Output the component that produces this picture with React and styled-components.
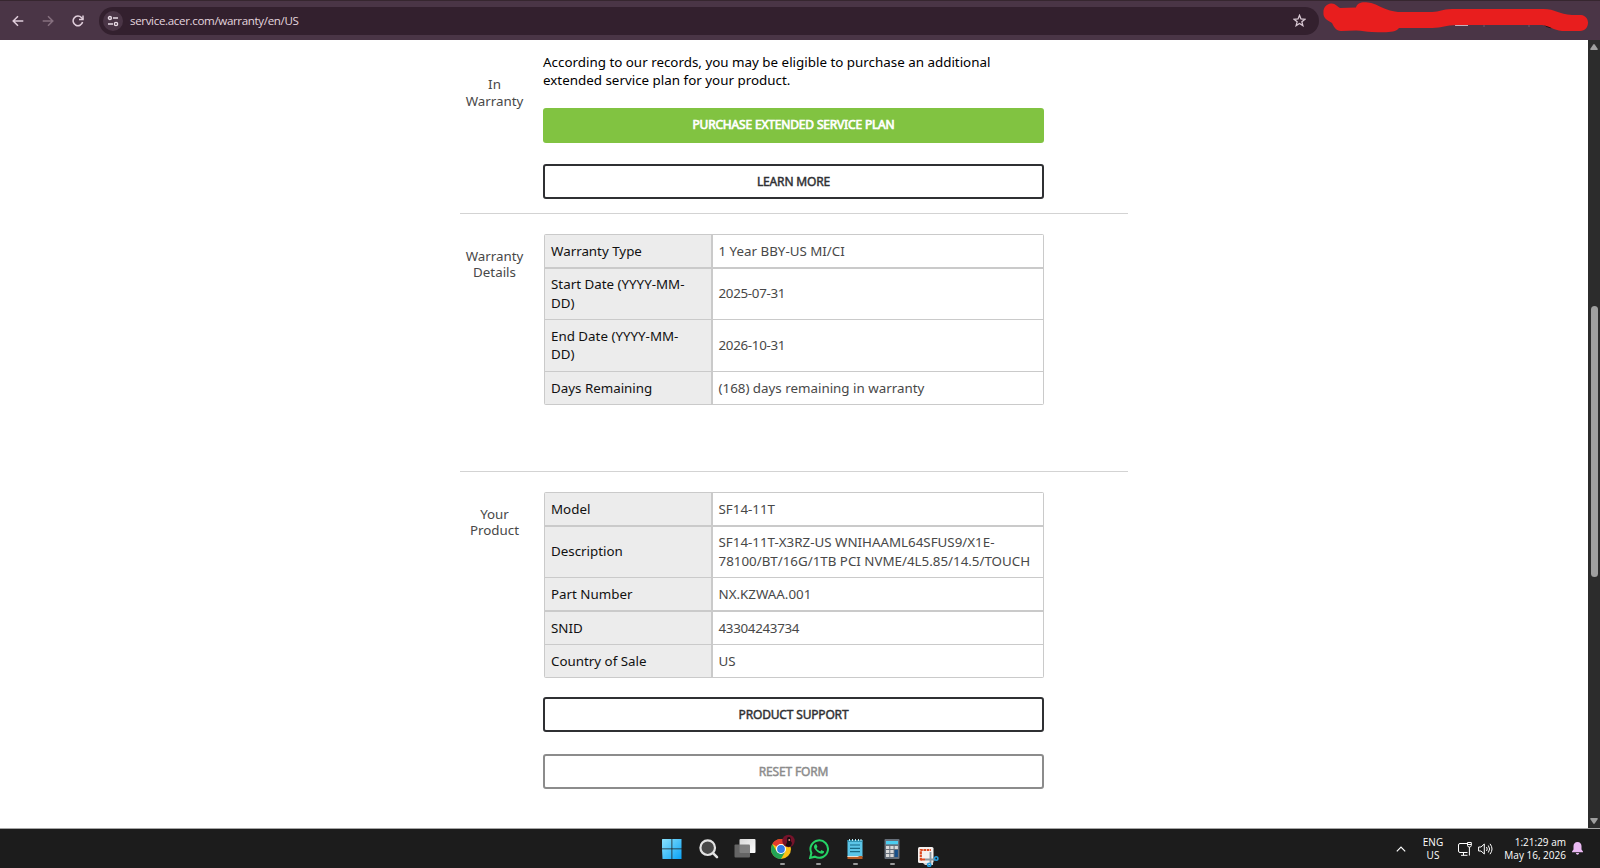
import React from 'react'
import styled, { createGlobalStyle } from 'styled-components'

const BLACK = '#111111'
const DARKGREY = '#484848'
const BORDER = '#cacaca'
const GREEN = '#81c341'
const RED = '#e81e1e'

const GlobalStyle = createGlobalStyle`
*{
    box-sizing: border-box;
}
body{
    margin: 0;
    overflow: hidden;
    font-family: "Noto Sans", "Open Sans", sans-serif;
}
p{
    margin: 0;
}
svg{
    display: block;
    flex-shrink: 0;
}
`

const Screen = styled.div`
display: flex;
flex-direction: column;
width: 1600px;
height: 868px;
overflow: hidden;
background: white;
`

const Toolbar = styled.div`
display: flex;
align-items: center;
height: 40px;
flex-shrink: 0;
padding-left: 10px;
background: #4a3546;
border-top: 1px solid #36262f;
`

const NavButton = styled.div`
display: flex;
justify-content: center;
align-items: center;
width: 16px;
height: 16px;
margin-right: ${props => props.$gap || 14}px;
`

const AddressBar = styled.div`
display: flex;
align-items: center;
width: 1220px;
height: 28px;
margin-right: 4px;
padding: 0 13px 0 4px;
border-radius: 14px;
background: #33202e;
`

const SiteInfo = styled.div`
display: flex;
justify-content: center;
align-items: center;
width: 20px;
height: 20px;
border-radius: 50%;
background: #4a3546;
`

const Url = styled.p`
flex-grow: 1;
margin-left: 7px;
font-family: "Open Sans", sans-serif;
font-size: 11.6px;
letter-spacing: -0.36px;
color: #e3d5de;
`

const Viewport = styled.div`
display: flex;
height: 788px;
flex-shrink: 0;
`

const Page = styled.div`
flex-grow: 1;
padding-left: 460px;
`

const Section = styled.div`
display: flex;
width: 668px;
height: ${props => props.$height}px;
padding-top: ${props => props.$top}px;
border-bottom: ${props => props.$last ? 'none' : '1px solid #d3d3d3'};
`

const Label = styled.p`
width: 69px;
margin-right: 14px;
padding-top: ${props => props.$top}px;
flex-shrink: 0;
text-align: center;
font-size: 13.35px;
line-height: 16.6px;
color: ${DARKGREY};
`

const Content = styled.div`
width: 501px;
`

const Message = styled.p`
font-size: 13.38px;
line-height: 18.4px;
color: #000;
`

const Button = styled.div`
display: flex;
justify-content: center;
align-items: center;
height: 35px;
margin-top: ${props => props.$top}px;
padding-bottom: 1px;
border: ${props => props.$filled ? 'none' : '2px solid ' + props.$color};
border-radius: 3px;
background: ${props => props.$filled ? GREEN : 'white'};
color: ${props => props.$filled ? 'white' : props.$color};
font-size: 12px;
letter-spacing: -0.17px;
-webkit-text-stroke: ${props => props.$filled ? 0.7 : 0.45}px currentColor;
`

const Table = styled.div`
display: grid;
grid-template-columns: 166px 1fr;
gap: 1.5px;
width: 500px;
margin-left: 1px;
padding: 1px;
background: ${BORDER};
border-radius: 2px;
`

const Cell = styled.div`
display: flex;
align-items: center;
height: ${props => props.$tall ? 50.25 : 32}px;
padding: 0 6px;
background: ${props => props.$head ? '#ececec' : 'white'};
color: ${props => props.$head ? BLACK : DARKGREY};
font-size: 13.35px;
line-height: 18.4px;
letter-spacing: ${props => props.$tight ? -0.3 : 0}px;
white-space: pre;
`

const Scrollbar = styled.div`
display: flex;
flex-direction: column;
align-items: center;
justify-content: space-between;
width: 12px;
padding: 4px 0;
background: #2c2c2c;
`

const Track = styled.div`
flex-grow: 1;
padding-top: 256px;
`

const Thumb = styled.div`
width: 7px;
height: 271px;
border-radius: 4px;
background: #9f9f9f;
`

const Taskbar = styled.div`
display: flex;
align-items: center;
height: 40px;
border-top: 1px solid #a5a5a5;
background: #1c1c1c;
`

const Apps = styled.div`
display: flex;
gap: 4.7px;
width: 300px;
margin-left: 656px;
`

const App32 = styled.div`
display: flex;
flex-direction: column;
align-items: center;
width: 32px;
height: 39px;
padding-top: ${props => props.$top || 9}px;
`

const Running = styled.div`
width: 5px;
height: 2px;
margin-top: 4px;
border-radius: 1px;
background: #9a9a9a;
`

const Tray = styled.div`
display: flex;
align-items: center;
margin-left: 440px;
color: white;
`

const TrayText = styled.p`
width: ${props => props.$width}px;
padding-top: 1px;
text-align: ${props => props.$align};
font-family: "Open Sans", sans-serif;
font-size: 10px;
line-height: 13.4px;
white-space: nowrap;
`

const TrayIcon = styled.div`
margin-left: ${props => props.$left || 0}px;
`

const Arrow = ({ flip, color }) => (
    <svg width="12" height="12" viewBox="0 0 12 12" fill="none" stroke={color} strokeWidth="1.5" transform={flip ? 'scale(-1 1)' : undefined}>
        <path d="M11.3 6H1.5M6 1.2L1.2 6L6 10.8" />
    </svg>
)

const Reload = () => (
    <svg width="12" height="12" viewBox="0 0 12 12" fill="none" stroke="#e0cedb" strokeWidth="1.5">
        <path d="M10.6 7A4.8 4.8 0 1 1 9.6 2.8L11 4.3" />
        <path d="M11 0.5V4.6H7" />
    </svg>
)

const Tune = () => (
    <svg width="12" height="12" viewBox="0 0 12 12" fill="none" stroke="#e8dbe5" strokeWidth="1.4">
        <circle cx="2.9" cy="3" r="1.5" />
        <path d="M6 3H11M1 9H6" />
        <circle cx="9" cy="9" r="1.6" />
    </svg>
)

const Star = () => (
    <svg width="13" height="13" viewBox="0 0 24 24" fill="none" stroke="#d9c9d4" strokeWidth="2.4">
        <path d="M12 2.5L14.7 9.2L22 9.7L16.4 14.4L18.2 21.5L12 17.6L5.8 21.5L7.6 14.4L2 9.7L9.3 9.2Z" />
    </svg>
)

const Scribble = () => (
    <svg width="277" height="39" viewBox="1323 1 277 39">
        <path d="M1455 24.5h13v1.2h-13z" fill="#f5e9f1" />
        <path d="M1544 25Q1549 30 1555 27L1550 24Z" fill="#111" />
        <path d="M1502 24.5h3M1507 24.5h3M1484 24v3M1529 24v3" stroke="#6e5a69" />
        <path fill={RED} d="M1331 3.5C1335 3 1338 7 1340 8L1356 7.5C1357 3 1362 1.5 1368 2.5C1377 3 1382 10 1398 12H1432C1440 12 1442 9 1452 9H1542C1555 8.5 1558 14 1572 15H1581C1591 16 1590 31 1580 31H1562C1553 30 1550 26 1542 25H1457C1445 25 1443 28 1432 28H1399C1395 33 1386 32.5 1372 32C1366 32 1362 30.5 1356 30.5L1341 31C1336 31 1334 27 1332 23C1326 20 1323 17 1323.5 13C1323 8 1326 4 1331 3.5Z" />
    </svg>
)

const Triangle = ({ down }) => (
    <svg width="8" height="6" viewBox="0 0 8 6" fill="#9f9f9f" transform={down ? 'scale(1 -1)' : undefined}>
        <path d="M3.3 0.5Q4 -0.3 4.7 0.5L7.8 5Q8 6 7 6H1Q0 6 0.2 5Z" />
    </svg>
)

const Windows = () => (
    <svg width="20" height="20" viewBox="0 0 20 20">
        <defs>
            <linearGradient id="win" x1="0" y1="0" x2="20" y2="20" gradientUnits="userSpaceOnUse">
                <stop offset="0" stopColor="#8be2fd" />
                <stop offset="1" stopColor="#08a1f5" />
            </linearGradient>
        </defs>
        <path fill="url(#win)" d="M.5 0H9.5V9.5H0V.5ZM10.3 0H19.5V9.5H10.3ZM0 10.3H9.5V20H.5ZM10.3 10.3H19.5V20H10.3Z" />
    </svg>
)

const Search = () => (
    <svg width="20" height="20" viewBox="0 0 20 20" stroke="#e2e2e2" strokeLinecap="round">
        <circle cx="8.7" cy="8.7" r="7.3" fill="#484848" strokeWidth="2.2" />
        <path d="M14.3 14.3L18 18.2" strokeWidth="2.5" />
    </svg>
)

const TaskView = () => (
    <svg width="22" height="20" viewBox="0 0 22 20">
        <defs>
            <linearGradient id="pane" x1="0" y1="0" x2="1" y2="1">
                <stop offset="0" stopColor="#d8d8d8" />
                <stop offset="1" stopColor="#ffffff" />
            </linearGradient>
        </defs>
        <rect x="5.5" y="1" width="16" height="14" rx="1" fill="url(#pane)" />
        <rect x=".5" y="6.500" width="15.5" height="13" rx="1" fill="#707070" opacity=".88" />
    </svg>
)

const Chrome = () => (
    <svg width="26" height="25" viewBox="0 0 26 25">
        <circle cx="12" cy="15" r="10" fill="#fbc116" />
        <path d="M12 15L3.34 10A10 10 0 0 1 20.66 10H12Z" fill="#e33b2e" />
        <path d="M3.34 10A10 10 0 0 0 12 25L16.3 17.5L12 15L7.7 17.5Z" fill="#23a455" />
        <circle cx="12" cy="15" r="5" fill="#fff" />
        <circle cx="12" cy="15" r="3.9" fill="#337be8" />
        <circle cx="19.5" cy="7" r="6.2" fill="#75132a" />
        <path d="M18 5Q18 2.5 20.5 3Q22.5 4 21.5 6.5L23 9L22 12Q19 13.5 16.5 11.5L18 8.500Z" fill="#180c12" />
        <path d="M19.5 5h1.5v2h-1.5z" fill="#c78170" />
    </svg>
)

const WhatsApp = () => (
    <svg width="20" height="20" viewBox="0 0 24 24" fill="#25d366">
        <path d="M17.472 14.382c-.297-.149-1.758-.867-2.03-.967-.273-.099-.471-.148-.67.15-.197.297-.767.966-.94 1.164-.173.199-.347.223-.644.075-.297-.15-1.255-.463-2.39-1.475-.883-.788-1.48-1.761-1.653-2.059-.173-.297-.018-.458.13-.606.134-.133.298-.347.446-.52.149-.174.198-.298.298-.497.099-.198.05-.371-.025-.52-.075-.149-.669-1.612-.916-2.207-.242-.579-.487-.5-.669-.51-.173-.008-.371-.01-.57-.01-.198 0-.52.074-.792.372-.272.297-1.04 1.016-1.04 2.479 0 1.462 1.065 2.875 1.213 3.074.149.198 2.096 3.2 5.077 4.487.709.306 1.262.489 1.694.625.712.227 1.36.195 1.871.118.571-.085 1.758-.719 2.006-1.413.248-.694.248-1.289.173-1.413-.074-.124-.272-.198-.57-.347" />
        <path d="M1.3 22.7L2.9 16.8A10.5 10.5 0 1 1 7.1 21.2Z" fill="none" stroke="#25d366" strokeWidth="2.4" />
    </svg>
)

const Notepad = () => (
    <svg width="16" height="20" viewBox="0 0 16 20">
        <rect x=".5" y="1" width="15" height="17" fill="#5bc5e8" />
        <rect x=".5" y="1" width="15" height="1.8" fill="#2b8ba9" />
        <path d="M2.5 0v2M5.500 0v2M8.500 0v2M11.500 0v2M14 0v2" stroke="#b8edfa" />
        <path d="M3 6h10M3 9.3h10M3 12.6h10" stroke="#176985" strokeWidth="1.2" />
        <path d="M.5 17h15V20H.5z" fill="#b65b24" />
        <path d="M.5 17h12l-2 1H.5z" fill="#e6e0d8" />
    </svg>
)

const Calculator = () => (
    <svg width="16" height="20" viewBox="0 0 16 20">
        <rect x=".5" width="15" height="20" rx="1" fill="#666f7a" />
        <rect x="2" y="2" width="12" height="3.3" fill="#4ccdf0" />
        <path d="M2 7h3.3v3H2zM6.3 7h3.3v3H6.3zM10.6 7h3.3v3h-3.3zM2 11h3.3v3H2zM6.3 11h3.3v3H6.3zM2 15h3.3v3H2zM6.3 15h3.3v3H6.3z" fill="#dadada" />
        <path d="M10.6 11h3.3v7h-3.3z" fill="#17508b" />
    </svg>
)

const Snip = () => (
    <svg width="21" height="20" viewBox="0 0 21 20">
        <rect x="0" y="0" width="15.5" height="16" rx="1.5" fill="#f5f1ef" />
        <path d="M5 16h10v2H7z" fill="#d7d7d7" />
        <path d="M2.8 13.5V3H13" fill="none" stroke="#db4920" strokeWidth="2.2" strokeDasharray="2.6 .7" />
        <path d="M3 12.500h4" stroke="#db4920" strokeWidth="2" />
        <path d="M12.5 5v11M7 12.500H17" stroke="#8d979e" strokeWidth="1.8" />
        <circle cx="18.2" cy="11.5" r="1.7" fill="none" stroke="#249fe0" strokeWidth="1.6" />
        <circle cx="11.2" cy="17.8" r="1.6" fill="none" stroke="#249fe0" strokeWidth="1.6" />
    </svg>
)

const Chevron = () => (
    <svg width="10" height="6" viewBox="0 0 10 6" fill="none" stroke="white" strokeWidth="1.2">
        <path d="M.8 5.3L5 1.1L9.2 5.3" />
    </svg>
)

const Network = () => (
    <svg width="14" height="14" viewBox="0 0 14 14" fill="none" stroke="white">
        <path d="M9 1.5H2Q.5 1.5 .5 3V9Q.5 10.5 2 10.5H9.5M5.5 10.5V13.3M3 13.3H9.5M9.5 .5H13.3V3.5Q13.3 5 11.4 5Q9.5 5 9.5 3.5ZM9.5 2.5H13.3M11.4 5V13.5" />
    </svg>
)

const Speaker = () => (
    <svg width="15" height="14" viewBox="0 0 15 14" fill="none" stroke="white">
        <path d="M.6 5H3L6.3 2V12L3 9H.6ZM8.5 5Q10 7 8.5 9M10.3 3.5Q13 7 10.3 10.5M12 1.8Q16 7 12 12.2" />
    </svg>
)

const Bell = () => (
    <svg width="11" height="13" viewBox="0 0 11 13" fill="#eab9f2">
        <path d="M5.5 0C8 0 9.5 1.8 9.5 4V7.5L11 9.5V10.3H0V9.5L1.5 7.5V4C1.5 1.8 3 0 5.5 0ZM3.8 11H7.2Q6.8 12.8 5.5 12.8Q4.2 12.8 3.8 11Z" />
    </svg>
)

const warranty = [
    ['Warranty Type', '1 Year BBY-US MI/CI'],
    ['Start Date (YYYY-MM-\nDD)', '2025-07-31'],
    ['End Date (YYYY-MM-\nDD)', '2026-10-31'],
    ['Days Remaining', '(168) days remaining in warranty'],
]

const product = [
    ['Model', 'SF14-11T'],
    ['Description', 'SF14-11T-X3RZ-US WNIHAAML64SFUS9/X1E-\n78100/BT/16G/1TB PCI NVME/4L5.85/14.5/TOUCH'],
    ['Part Number', 'NX.KZWAA.001'],
    ['SNID', '43304243734'],
    ['Country of Sale', 'US'],
]

const InfoTable = ({ rows }) => (
    <Table>
        {rows.map(([name, value]) => {
            const tall = (name + value).includes('\n')
            return (
                <React.Fragment key={name}>
                    <Cell $head $tall={tall}>{name}</Cell>
                    <Cell $tall={tall} $tight={/^[\d-]+$/.test(value)}>{value}</Cell>
                </React.Fragment>
            )
        })}
    </Table>
)

const App = () => {
    return (
        <Screen>
            <GlobalStyle />
            <Toolbar>
                <NavButton><Arrow color="#e0cedb" /></NavButton>
                <NavButton><Arrow flip color="#86707f" /></NavButton>
                <NavButton $gap={13}><Reload /></NavButton>
                <AddressBar>
                    <SiteInfo><Tune /></SiteInfo>
                    <Url>service.acer.com/warranty/en/US</Url>
                    <Star />
                </AddressBar>
                <Scribble />
            </Toolbar>
            <Viewport>
                <Page>
                    <Section $height={174} $top={13}>
                        <Label $top={23}>In<br />Warranty</Label>
                        <Content>
                            <Message>According to our records, you may be eligible to purchase an additional<br />extended service plan for your product.</Message>
                            <Button $filled $top={18}>PURCHASE EXTENDED SERVICE PLAN</Button>
                            <Button $color="#2f3033" $top={21.5}>LEARN MORE</Button>
                        </Content>
                    </Section>
                    <Section $height={258} $top={20}>
                        <Label $top={13.5}>Warranty<br />Details</Label>
                        <Content>
                            <InfoTable rows={warranty} />
                        </Content>
                    </Section>
                    <Section $last $height={350} $top={20}>
                        <Label $top={13.5}>Your<br />Product</Label>
                        <Content>
                            <InfoTable rows={product} />
                            <Button $color="#2f3033" $top={19}>PRODUCT SUPPORT</Button>
                            <Button $color="#8c8c8c" $top={22}>RESET FORM</Button>
                        </Content>
                    </Section>
                </Page>
                <Scrollbar>
                    <Triangle />
                    <Track><Thumb /></Track>
                    <Triangle down />
                </Scrollbar>
            </Viewport>
            <Taskbar>
                <Apps>
                    <App32 $top={10}><Windows /></App32>
                    <App32 $top={10}><Search /></App32>
                    <App32 $top={9}><TaskView /></App32>
                    <App32 $top={5}><Chrome /><Running /></App32>
                    <App32 $top={10}><WhatsApp /><Running /></App32>
                    <App32 $top={10}><Notepad /><Running /></App32>
                    <App32 $top={10}><Calculator /><Running /></App32>
                    <App32 $top={18}><Snip /></App32>
                </Apps>
                <Tray>
                    <TrayIcon><Chevron /></TrayIcon>
                    <TrayIcon $left={16}><TrayText $width={22} $align="center">ENG<br />US</TrayText></TrayIcon>
                    <TrayIcon $left={14}><Network /></TrayIcon>
                    <TrayIcon $left={6}><Speaker /></TrayIcon>
                    <TrayText $width={73} $align="right">1:21:29 am<br />May 16, 2026</TrayText>
                    <TrayIcon $left={6}><Bell /></TrayIcon>
                </Tray>
            </Taskbar>
        </Screen>
    )
}

export default App
